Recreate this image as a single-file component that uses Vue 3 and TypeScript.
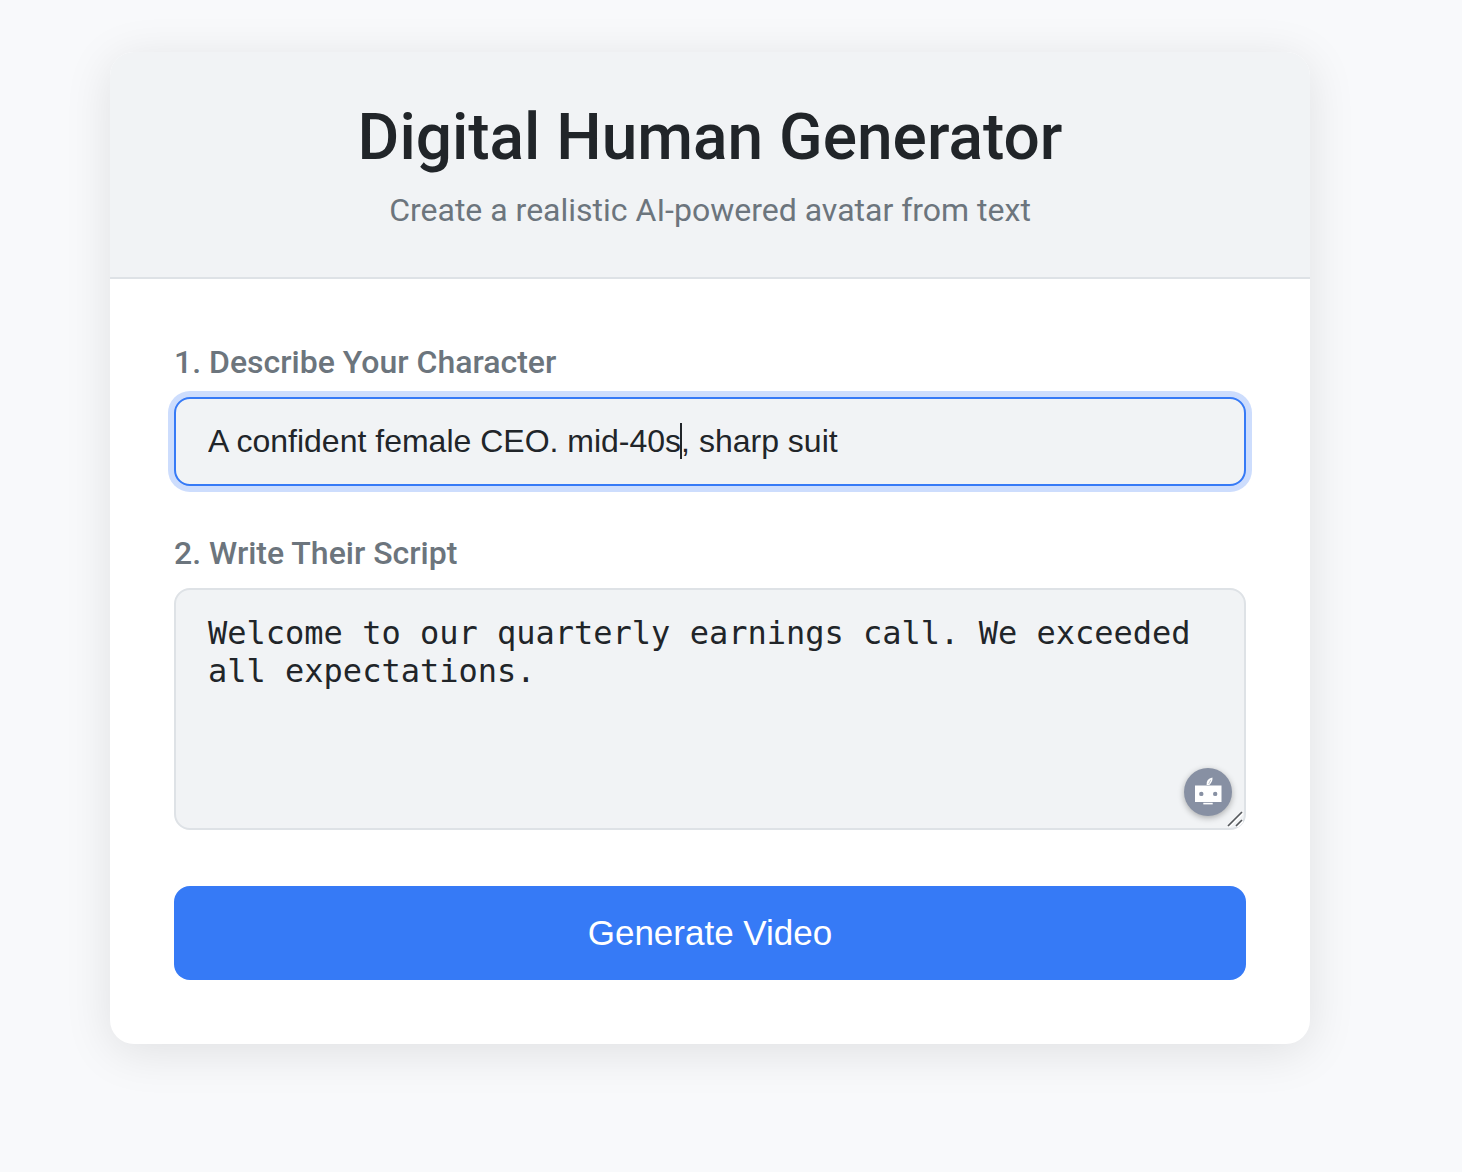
<script setup lang="ts">
import { ref } from 'vue'

const character = ref('A confident female CEO. mid-40s, sharp suit')
const speech = ref('Welcome to our quarterly earnings call. We exceeded all expectations.')
</script>

<template>
  <main class="page">
    <section class="card">
      <header class="card-header">
        <h1>Digital Human Generator</h1>
        <p>Create a realistic AI-powered avatar from text</p>
      </header>
      <form class="card-body" @submit.prevent>
        <div class="field">
          <label for="character">1. Describe Your Character</label>
          <div class="control">
            <input id="character" v-model="character" class="active" type="text" spellcheck="false" />
            <span class="caret" aria-hidden="true"></span>
          </div>
        </div>
        <div class="field">
          <label for="speech">2. Write Their Script</label>
          <div class="control">
            <textarea id="speech" v-model="speech" spellcheck="false"></textarea>
            <button class="assistant" type="button" aria-label="Writing assistant">
              <svg width="28" height="28" viewBox="0 0 28 28" aria-hidden="true">
                <path d="M12.6 9 Q12 3 18.4 1.6 Q19 5.4 15.4 9 Z" fill="#fff" />
                <path d="M14.6 8 L16.8 3.8" stroke="#8790a3" stroke-width="0.5" fill="none" />
                <rect x="1" y="9.5" width="26.5" height="16.5" fill="#fff" />
                <circle cx="7.3" cy="17.9" r="2.2" fill="#8790a3" />
                <circle cx="21.2" cy="17.9" r="2.2" fill="#8790a3" />
                <rect x="9.3" y="26.8" width="9.4" height="1.6" fill="#fff" />
              </svg>
            </button>
            <svg class="grip" width="16" height="16" viewBox="0 0 16 16" aria-hidden="true">
              <path d="M1 15 L15 1 M9 15 L15 9" stroke="#fff" stroke-width="2" transform="translate(1 1)" />
              <path d="M1 15 L15 1 M9 15 L15 9" stroke="#55585c" stroke-width="1.7" />
            </svg>
          </div>
        </div>
        <button class="submit" type="submit">Generate Video</button>
      </form>
    </section>
  </main>
</template>

<style>
body {
  margin: 0;
  background: #f8f9fb;
}
</style>

<style scoped>
* {
  box-sizing: border-box;
}

.page {
  padding: 52px 42px 128px 0;
  font-family: Roboto, "Liberation Sans", sans-serif;
  color: #212529;
}

.card {
  max-width: 1200px;
  margin: 0 auto;
  overflow: hidden;
  border-radius: 24px;
  background: #fff;
  box-shadow: 0 8px 48px rgba(0, 0, 0, 0.1);
}

.card-header {
  padding: 48px;
  text-align: center;
  background: #f1f3f5;
  border-bottom: 2px solid #dee2e6;
}

h1 {
  margin: 0 0 16px;
  font-size: 64px;
  font-weight: 500;
  line-height: 75px;
}

p {
  margin: 0;
  font-size: 32px;
  line-height: 38px;
  color: #6c757d;
}

.card-body {
  display: flex;
  flex-direction: column;
  gap: 48px;
  padding: 64px;
}

.field {
  display: flex;
  flex-direction: column;
  gap: 16px;
}

label {
  font-size: 32px;
  font-weight: 500;
  line-height: 38px;
  color: #6c757d;
}

.control {
  position: relative;
  display: flex;
}

input,
textarea {
  width: 100%;
  margin: 0;
  padding: 24px 32px;
  border: 2px solid #dee2e6;
  border-radius: 16px;
  outline: none;
  background: #f1f3f5;
  color: #212529;
  font-size: 32px;
}

input {
  height: 89px;
  font-family: "Liberation Sans", Arial, sans-serif;
}

input.active,
input:focus,
textarea:focus {
  border-color: #367af6;
  box-shadow: 0 0 0 6px #cdddfd;
}

textarea {
  height: 242px;
  resize: none;
  font-family: "DejaVu Sans Mono", monospace;
  line-height: 38px;
}

.caret {
  position: absolute;
  left: 506px;
  top: 26px;
  width: 2px;
  height: 36px;
  background: #212529;
}

.assistant {
  position: absolute;
  right: 14px;
  bottom: 14px;
  display: flex;
  align-items: flex-start;
  justify-content: center;
  width: 48px;
  height: 48px;
  padding: 8px 0 0;
  border: 0;
  border-radius: 50%;
  background: #8790a3;
  box-shadow: 0 2px 6px rgba(0, 0, 0, 0.3);
}

.assistant svg {
  overflow: visible;
}

.grip {
  position: absolute;
  right: 3px;
  bottom: 3px;
}

.submit {
  height: 94px;
  margin-top: 8px;
  border: 0;
  border-radius: 16px;
  background: #367af6;
  color: #fff;
  font-family: "Liberation Sans", Arial, sans-serif;
  font-size: 35px;
}
</style>
